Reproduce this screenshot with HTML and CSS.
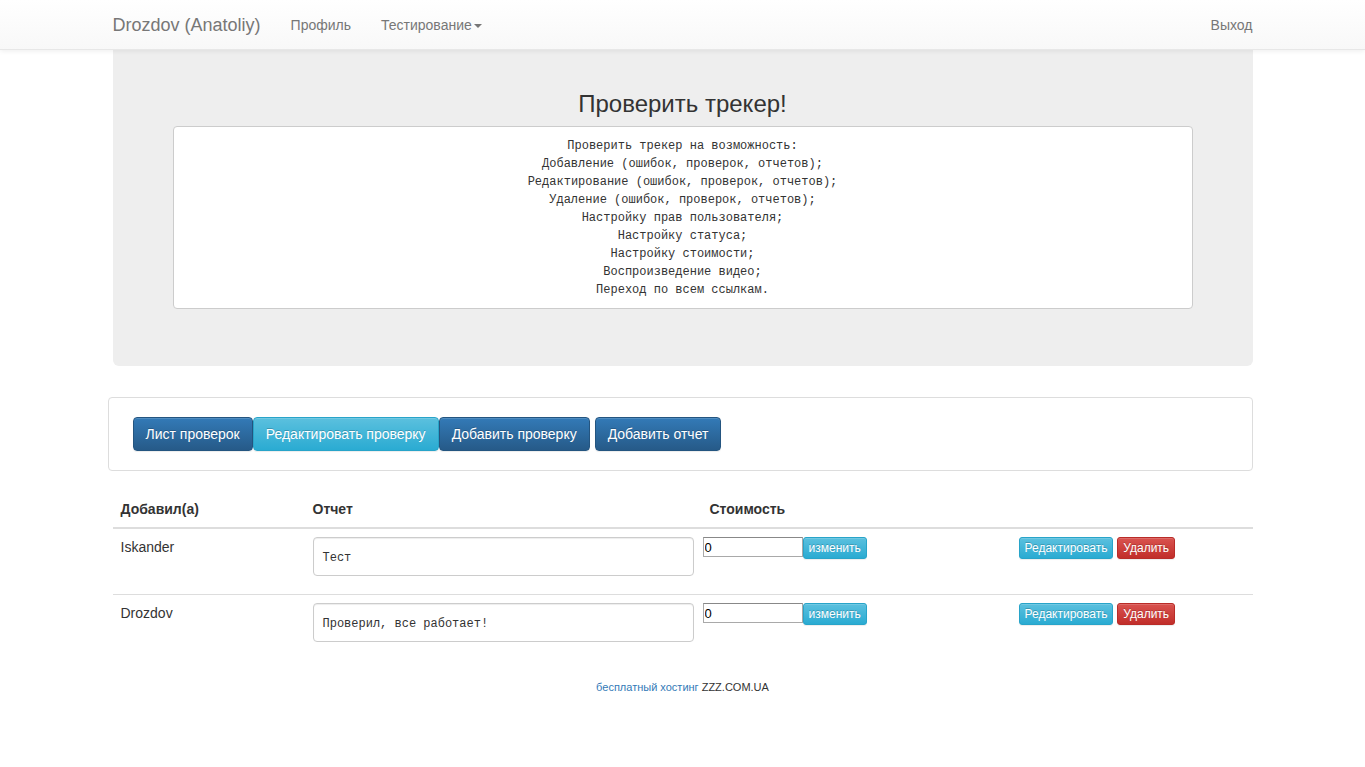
FILE: index.html
```html
<!DOCTYPE html>
<html lang="ru">
<head>
<meta charset="utf-8">
<title>Проверить трекер!</title>
<link rel="stylesheet" href="styles.css">
</head>
<body>
<nav class="navbar">
  <div class="container nav-inner">
    <a class="brand" href="#">Drozdov (Anatoliy)</a>
    <ul class="nav">
      <li><a href="#">Профиль</a></li>
      <li><a href="#">Тестирование<span class="caret"></span></a></li>
    </ul>
    <ul class="nav nav-right">
      <li><a href="#">Выход</a></li>
    </ul>
  </div>
</nav>

<div class="container">
  <div class="jumbotron">
    <h3 class="jt-title">Проверить трекер!</h3>
    <pre class="jt-pre">Проверить трекер на возможность:
Добавление (ошибок, проверок, отчетов);
Редактирование (ошибок, проверок, отчетов);
Удаление (ошибок, проверок, отчетов);
Настройку прав пользователя;
Настройку статуса;
Настройку стоимости;
Воспроизведение видео;
Переход по всем ссылкам.</pre>
  </div>

  <div class="actions">
    <a class="btn btn-primary" href="#">Лист проверок</a>
    <a class="btn btn-info" href="#">Редактировать проверку</a>
    <a class="btn btn-primary gap" href="#">Добавить проверку</a>
    <a class="btn btn-primary" href="#">Добавить отчет</a>
  </div>

  <table class="table">
    <thead>
      <tr>
        <th class="c1">Добавил(а)</th>
        <th class="c2">Отчет</th>
        <th class="c3">Стоимость</th>
        <th class="c4"></th>
      </tr>
    </thead>
    <tbody>
      <tr>
        <td>Iskander</td>
        <td><textarea class="report">Тест</textarea></td>
        <td class="cost"><span class="cost-row"><input class="cost-input" type="text" value="0"><a class="btn btn-xs btn-info" href="#">изменить</a></span></td>
        <td><a class="btn btn-xs btn-info" href="#">Редактировать</a> <a class="btn btn-xs btn-danger" href="#">Удалить</a></td>
      </tr>
      <tr>
        <td>Drozdov</td>
        <td><textarea class="report">Проверил, все работает!</textarea></td>
        <td class="cost"><span class="cost-row"><input class="cost-input" type="text" value="0"><a class="btn btn-xs btn-info" href="#">изменить</a></span></td>
        <td><a class="btn btn-xs btn-info" href="#">Редактировать</a> <a class="btn btn-xs btn-danger" href="#">Удалить</a></td>
      </tr>
    </tbody>
  </table>

  <div class="footer"><a href="#">бесплатный хостинг</a> ZZZ.COM.UA</div>
</div>
</body>
</html>
```

FILE: styles.css
```css
* { box-sizing: border-box; }
html, body { margin: 0; padding: 0; }
body {
  font-family: "Liberation Sans", Arial, sans-serif;
  font-size: 14px;
  line-height: 20px;
  color: #333;
  background: #fff;
}
a { text-decoration: none; }

.container {
  width: 1170px;
  margin: 0 auto;
  padding: 0 15px;
}

/* navbar */
.navbar {
  height: 50px;
  background-image: linear-gradient(to bottom, #fff 0, #f8f8f8 100%);
  border-bottom: 1px solid #e7e7e7;
  box-shadow: inset 0 1px 0 rgba(255,255,255,.15), 0 1px 5px rgba(0,0,0,.075);
  position: relative;
  z-index: 2;
}
.nav-inner {
  display: flex;
  align-items: center;
  height: 49px;
}
.brand {
  margin-left: -15px;
  padding: 15px;
  font-size: 18px;
  line-height: 20px;
  color: #777;
  text-shadow: 0 1px 0 rgba(255,255,255,.25);
}
.nav {
  list-style: none;
  margin: 0;
  padding: 0;
  display: flex;
}
.nav a {
  display: block;
  padding: 15px;
  line-height: 20px;
  color: #777;
  text-shadow: 0 1px 0 rgba(255,255,255,.25);
}
.nav-right { margin-left: auto; margin-right: -15px; }
.caret {
  display: inline-block;
  width: 0;
  height: 0;
  margin-left: 2px;
  vertical-align: middle;
  border-top: 4px solid #777;
  border-left: 4px solid transparent;
  border-right: 4px solid transparent;
}

/* jumbotron */
.jumbotron {
  background: #eee;
  border-radius: 0 0 6px 6px;
  padding: 41px 60px 47px;
  margin-bottom: 31px;
}
.jt-title {
  margin: 0 0 9px;
  font-size: 24px;
  font-weight: 500;
  line-height: 26px;
  text-align: center;
  color: #333;
}
.jt-pre {
  margin: 0 0 10px;
  padding: 10px 9.5px 9px;
  background: #fff;
  border: 1px solid #ccc;
  border-radius: 4px;
  font-family: "Liberation Mono", "DejaVu Sans Mono", monospace;
  font-size: 12px;
  line-height: 18px;
  text-align: center;
  color: #333;
  white-space: pre;
}

/* action panel */
.actions {
  margin-left: -5px;
  border: 1px solid #ddd;
  border-radius: 4px;
  padding: 19px 24px;
  display: flex;
}
.btn {
  display: inline-block;
  padding: 6px 12px;
  font-size: 14px;
  line-height: 20px;
  border: 1px solid transparent;
  border-radius: 4px;
  color: #fff;
  text-shadow: 0 -1px 0 rgba(0,0,0,.2);
  box-shadow: inset 0 1px 0 rgba(255,255,255,.15), 0 1px 1px rgba(0,0,0,.075);
  white-space: nowrap;
  vertical-align: middle;
}
.btn-primary {
  background-image: linear-gradient(to bottom, #337ab7 0, #265a88 100%);
  border-color: #245580;
}
.btn-info {
  background-image: linear-gradient(to bottom, #5bc0de 0, #2aabd2 100%);
  border-color: #28a4c9;
}
.btn-danger {
  background-image: linear-gradient(to bottom, #d9534f 0, #c12e2a 100%);
  border-color: #b92c28;
}
.gap { margin-right: 5px; }
.btn-xs {
  padding: 1px 5px;
  font-size: 12px;
  line-height: 18px;
  border-radius: 3px;
}

/* table */
.table {
  width: 100%;
  border-collapse: collapse;
  margin-top: 20px;
  margin-bottom: 20px;
}
.table th {
  text-align: left;
  font-weight: bold;
  padding: 8px;
  line-height: 20px;
  border-bottom: 2px solid #ddd;
  vertical-align: bottom;
}
.table td {
  padding: 8px;
  line-height: 20px;
  vertical-align: top;
  border-top: 1px solid #ddd;
}
.table tbody tr:first-child td { border-top: 0; }
.c1 { width: 192px; }
.c2 { width: 397px; }
.c3 { width: 309px; }
.table td.cost { padding-left: 1px; }
.cost-row { display: flex; align-items: flex-start; }
.report {
  display: block;
  width: 100%;
  height: 39px;
  margin: 0 0 10px;
  padding: 11px 9px 7px;
  border: 1px solid #ccc;
  border-radius: 4px;
  font-family: "Liberation Mono", "DejaVu Sans Mono", monospace;
  font-size: 12px;
  line-height: 18px;
  color: #333;
  resize: none;
  overflow: hidden;
  box-shadow: inset 0 1px 1px rgba(0,0,0,.075);
}
.cost-input {
  width: 100px;
  height: 20px;
  margin: 0;
  padding: 0 1px;
  border: 1px solid #a9a9a9;
  border-top-color: #888;
  font-family: "Liberation Sans", Arial, sans-serif;
  font-size: 13px;
  color: #000;
}

/* footer */
.footer {
  text-align: center;
  font-size: 11px;
  line-height: 14px;
  color: #333;
}
.footer a { color: #337ab7; }
```
